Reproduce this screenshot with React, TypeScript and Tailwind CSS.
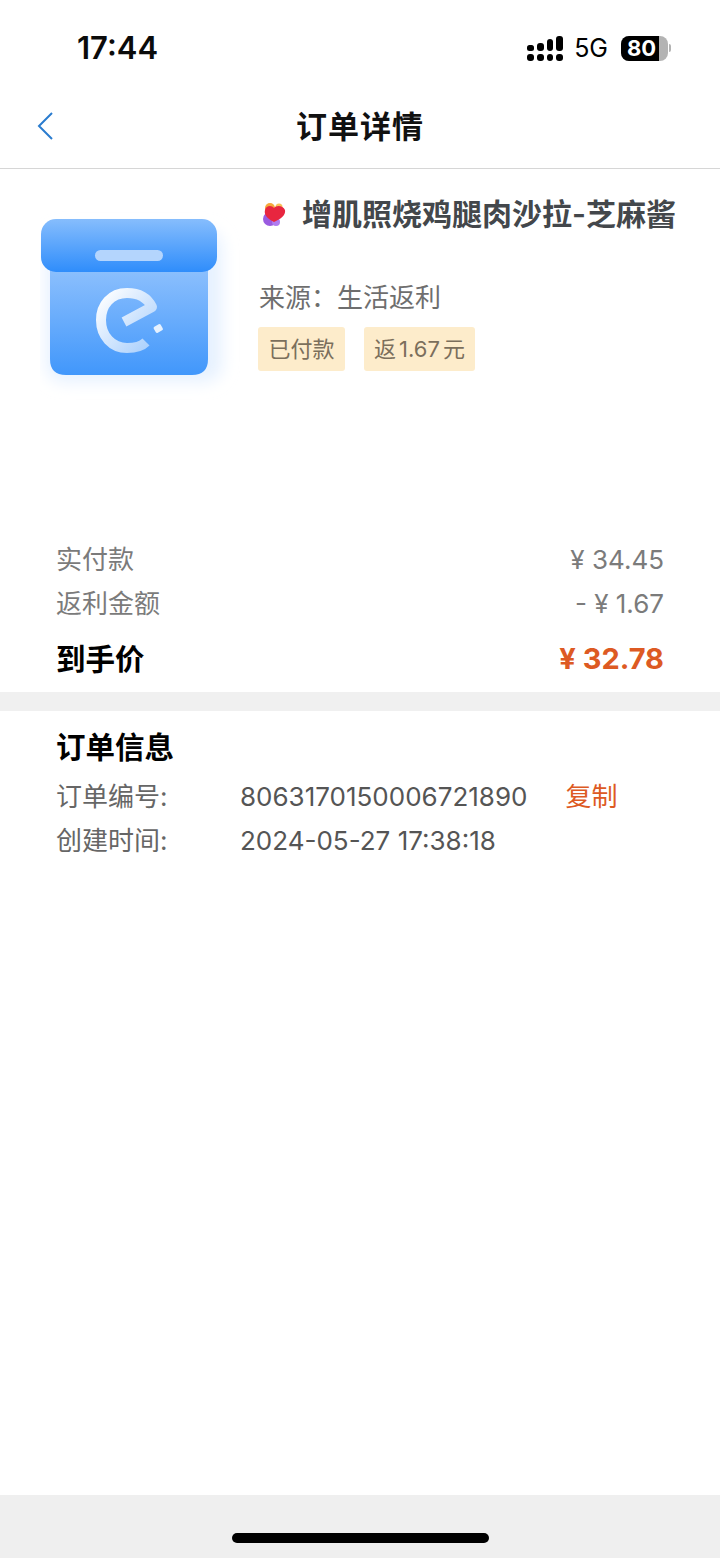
import React from 'react';

const FONT = '[font-family:Inter,"Noto_Sans_CJK_SC",sans-serif]';

function SignalIcon() {
  return (
    <svg width="36" height="25" viewBox="0 0 36 25" className="fill-black">
      <rect x="0" y="9" width="7" height="6" rx="2.5" />
      <rect x="10" y="7" width="7" height="8" rx="3" />
      <rect x="20" y="3" width="6" height="12" rx="3" />
      <rect x="29" y="0" width="7" height="15" rx="3" />
      <rect x="0" y="18" width="7" height="7" rx="3" />
      <rect x="10" y="18" width="7" height="7" rx="3" />
      <rect x="20" y="18" width="6" height="7" rx="3" />
      <rect x="29" y="18" width="7" height="7" rx="3" />
    </svg>
  );
}

function BoxIllustration() {
  return (
    <svg width="200" height="190" viewBox="0 0 200 190">
      <defs>
        <linearGradient id="lid" x1="0" y1="0" x2="0" y2="1">
          <stop offset="0" stopColor="#86bdfd" />
          <stop offset="1" stopColor="#2f8dfb" />
        </linearGradient>
        <linearGradient id="body" x1="0" y1="0" x2="0" y2="1">
          <stop offset="0" stopColor="#8fc1fd" />
          <stop offset="1" stopColor="#4197fb" />
        </linearGradient>
        <linearGradient id="logo" x1="0" y1="0" x2="1" y2="1">
          <stop offset="0" stopColor="#ffffff" />
          <stop offset="1" stopColor="#a9cffc" />
        </linearGradient>
        <filter id="soft" x="-20%" y="-20%" width="140%" height="140%">
          <feGaussianBlur stdDeviation="8" />
        </filter>
      </defs>
      <rect x="6" y="20" width="176" height="152" rx="18" fill="#e6f1fe" filter="url(#soft)" />
      <path d="M10 55 H168 V149 Q168 165 152 165 H26 Q10 165 10 149 Z" fill="url(#body)" />
      <rect x="1" y="9" width="176" height="53" rx="15" fill="url(#lid)" />
      <rect x="55" y="40" width="68" height="11" rx="5.5" fill="#b4d5fd" />
      <path
        d="M84 112 L112 97 C107 87 98 83 87 83 C71 83 61 95 61 110 C61 126 72 138 87 138 C95 138 102 136 106 132"
        fill="none"
        stroke="url(#logo)"
        strokeWidth="10"
        strokeLinejoin="round"
      />
      <rect x="114" y="115" width="8" height="7" rx="1.5" transform="rotate(-30 118 118)" fill="#e6f1fe" />
    </svg>
  );
}

function HeartLogo() {
  return (
    <svg width="24" height="26" viewBox="0 0 24 26">
      <circle cx="8" cy="18" r="7" fill="#9a5be0" />
      <circle cx="14" cy="21" r="4" fill="#b07cf0" />
      <circle cx="8" cy="7" r="5" fill="#f5a83c" />
      <circle cx="17" cy="6" r="3.5" fill="#f7c15a" />
      <path d="M12 21 C4 17 2 13 3 9 C4 4 10 4 12 7 C14 4 21 4 23 9 C24 14 19 18 12 21 Z" fill="#e8263f" />
    </svg>
  );
}

export default function App() {
  return (
    <div className={`${FONT} w-[720px] h-[1558px] bg-white flex flex-col`}>
      {/* status bar */}
      <div className="h-[94px] pl-[77px] pr-[49px] flex items-start justify-between">
        <span className="mt-[29px] text-[31px] leading-[37px] font-semibold text-[#0b0b0b]">17:44</span>
        <div className="mt-[34px] flex items-center">
          <SignalIcon />
          <span className="ml-[11px] text-[25px] leading-[28px] text-black">5G</span>
          <div className="ml-[13px] w-[47px] h-[25px] rounded-[8px] bg-[#b3b3b3] overflow-hidden">
            <div className="w-[38px] h-full bg-black pl-[6px] flex items-center text-[22px] leading-none font-bold text-white">80</div>
          </div>
          <div className="ml-[1px] w-[2px] h-[8px] rounded-r-full bg-[#b3b3b3]" />
        </div>
      </div>

      {/* title bar */}
      <div className="relative h-[75px] pb-[9px] border-b border-[#d6d6d6] flex items-center justify-center">
        <svg className="absolute left-[37px] top-[18px]" width="16" height="28" viewBox="0 0 16 28" fill="none">
          <path d="M15 1 L2 14 L15 27" stroke="#2a7ccf" strokeWidth="2" />
        </svg>
        <span className="text-[31px] leading-[40px] font-semibold tracking-[1px] text-[#111]">订单详情</span>
      </div>

      {/* product */}
      <div className="h-[354px] flex">
        <div className="ml-[40px] mt-[41px] w-[200px] h-[190px] shrink-0">
          <BoxIllustration />
        </div>
        <div className="ml-[18px] flex-1">
          <div className="mt-[26px] h-[38px] flex items-center">
            <div className="ml-[4px] w-[24px] h-[26px] shrink-0">
              <HeartLogo />
            </div>
            <span className="ml-[16px] text-[30px] leading-[38px] font-semibold text-[#43474b] whitespace-nowrap">增肌照烧鸡腿肉沙拉-芝麻酱</span>
          </div>
          <div className="mt-[47px] ml-[1px] text-[26px] leading-[36px] text-[#6e6e6e]">来源：生活返利</div>
          <div className="mt-[11px] flex gap-[19px]">
            <div className="w-[87px] h-[44px] rounded-[3px] bg-[#fdeccb] text-[#7b6f5c] text-[22px] flex items-center justify-center">已付款</div>
            <div className="w-[111px] h-[44px] rounded-[3px] bg-[#fdeccb] text-[#7b6f5c] text-[22px] [word-spacing:-3px] flex items-center justify-center">返 1.67 元</div>
          </div>
        </div>
      </div>

      {/* price */}
      <div className="px-[56px] h-[169px] pt-[14px]">
        <div className="h-[44px] flex items-center justify-between text-[26px] text-[#7b7b7b]">
          <span>实付款</span>
          <span>¥ 34.45</span>
        </div>
        <div className="h-[44px] flex items-center justify-between text-[26px] text-[#7b7b7b]">
          <span>返利金额</span>
          <span>- ¥ 1.67</span>
        </div>
        <div className="mt-[9px] h-[50px] flex items-center justify-between">
          <span className="text-[29.5px] font-semibold text-black">到手价</span>
          <span className="text-[29px] font-bold text-[#dd5a23]">¥ 32.78</span>
        </div>
      </div>

      <div className="h-[19px] bg-[#f0f0f0]" />

      {/* order info */}
      <div className="flex-1 px-[56px] pt-[16px]">
        <div className="text-[29.5px] leading-[40px] font-semibold text-black">订单信息</div>
        <div className="mt-[7px] h-[44px] flex items-center text-[26px] text-[#555]">
          <span className="w-[184px] text-[#666]">订单编号:</span>
          <span>8063170150006721890</span>
          <span className="ml-[38px] text-[#dd5a23]">复制</span>
        </div>
        <div className="h-[44px] flex items-center text-[26px] text-[#555]">
          <span className="w-[184px] text-[#666]">创建时间:</span>
          <span>2024-05-27 17:38:18</span>
        </div>
      </div>

      {/* home indicator */}
      <div className="h-[63px] bg-[#efefef] flex justify-center pt-[38px]">
        <div className="w-[257px] h-[10px] rounded-full bg-black" />
      </div>
    </div>
  );
}
